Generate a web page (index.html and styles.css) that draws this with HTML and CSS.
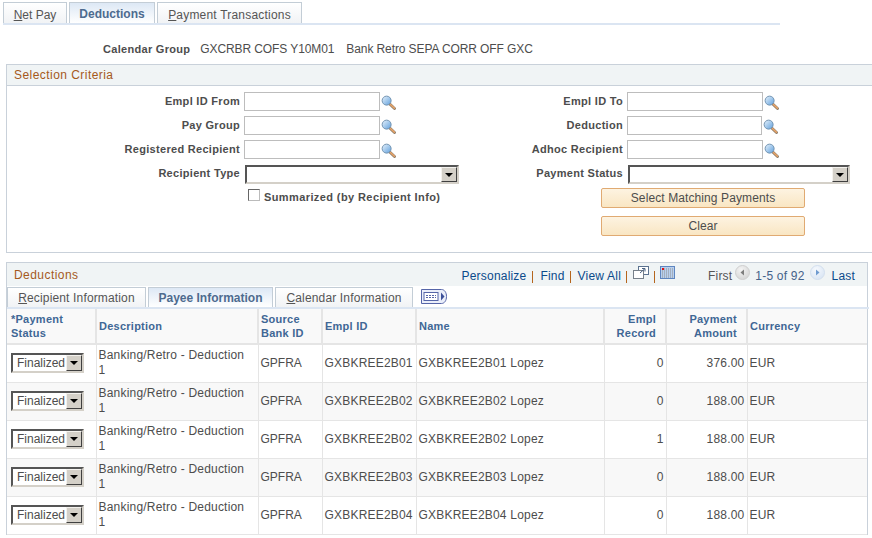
FILE: index.html
```html
<!DOCTYPE html>
<html lang="en">
<head>
<meta charset="utf-8">
<title>Deductions</title>
<link rel="stylesheet" href="styles.css">
</head>
<body>
<svg class="defs" width="0" height="0" aria-hidden="true">
  <defs>
    <linearGradient id="lens" x1="0" y1="0" x2="1" y2="1">
      <stop offset="0" stop-color="#e8f3fc"/><stop offset="1" stop-color="#5f9fdc"/>
    </linearGradient>
    <radialGradient id="btnL" cx="0.4" cy="0.3" r="0.8">
      <stop offset="0" stop-color="#f4f4f4"/><stop offset="1" stop-color="#d2d2d2"/>
    </radialGradient>
    <radialGradient id="btnR" cx="0.4" cy="0.3" r="0.8">
      <stop offset="0" stop-color="#f6f9fd"/><stop offset="1" stop-color="#d6e3f3"/>
    </radialGradient>
    <symbol id="mag" viewBox="0 0 16 16">
      <path d="M9.6 9.8 14.4 14.4" stroke="#8a7a66" stroke-width="3" stroke-linecap="round"/>
      <path d="M9.8 9.8 14.2 14" stroke="#e9a468" stroke-width="1.6" stroke-linecap="round"/>
      <circle cx="6" cy="6" r="4.8" fill="url(#lens)" stroke="#6d8fae" stroke-width="1"/>
    </symbol>
  </defs>
</svg>

<nav class="tabs">
  <a class="tab tab-net"><u>N</u>et Pay</a>
  <a class="tab tab-on">Deductions</a>
  <a class="tab tab-pay"><u>P</u>ayment Transactions</a>
</nav>

<p class="calendar"><b>Calendar Group</b><span>GXCRBR COFS Y10M01</span><span>Bank Retro SEPA CORR OFF GXC</span></p>

<section class="criteria">
  <h2 class="section-title">Selection Criteria</h2>
  <div class="form">
    <label class="lbl">Empl ID From</label>
    <div class="field"><span class="input"></span><svg class="mag"><use href="#mag"/></svg></div>
    <label class="lbl">Empl ID To</label>
    <div class="field"><span class="input"></span><svg class="mag"><use href="#mag"/></svg></div>

    <label class="lbl">Pay Group</label>
    <div class="field"><span class="input"></span><svg class="mag"><use href="#mag"/></svg></div>
    <label class="lbl">Deduction</label>
    <div class="field"><span class="input input-short"></span><svg class="mag"><use href="#mag"/></svg></div>

    <label class="lbl">Registered Recipient</label>
    <div class="field"><span class="input"></span><svg class="mag"><use href="#mag"/></svg></div>
    <label class="lbl">Adhoc Recipient</label>
    <div class="field"><span class="input"></span><svg class="mag"><use href="#mag"/></svg></div>

    <label class="lbl">Recipient Type</label>
    <div class="field"><span class="select select-left"><i class="arrow"></i></span></div>
    <label class="lbl">Payment Status</label>
    <div class="field"><span class="select select-right"><i class="arrow"></i></span></div>

    <div class="check-cell"><span class="checkbox"></span><b>Summarized (by Recipient Info)</b></div>
    <div class="button-cell">
      <button class="btn">Select Matching Payments</button>
      <button class="btn">Clear</button>
    </div>
  </div>
</section>

<section class="grid">
  <header class="grid-head">
    <h2 class="section-title-plain">Deductions</h2>
    <div class="grid-nav">
      <a>Personalize</a><i class="sep sep-first"></i><a>Find</a><i class="sep"></i><a>View All</a><i class="sep sep-view"></i>
      <svg class="ico" width="16" height="14" viewBox="0 0 16 14" aria-hidden="true">
        <rect x="5.5" y="0.5" width="10" height="8" fill="#fff" stroke="#5b7290"/>
        <rect x="0.5" y="4.5" width="10" height="8" fill="#fff" stroke="#77808a"/>
        <path d="M7 7 12 2.5M9 2.5h3v3" fill="none" stroke="#4b6282"/>
      </svg>
      <i class="sep sep-tight"></i>
      <svg class="ico" width="15" height="13" viewBox="0 0 15 13" aria-hidden="true">
        <rect x="0.5" y="0.5" width="14" height="12" fill="#b9d0ee" stroke="#5f86c0"/>
        <path d="M2 3h11M2 5h11M2 7h11M2 9h11M2 11h11" stroke="#8e8e8e" stroke-dasharray="1 1"/>
        <rect x="2" y="2" width="2" height="2" fill="#e01010"/>
      </svg>
      <span class="first">First</span>
      <svg class="round" width="15" height="15" viewBox="0 0 15 15" aria-hidden="true">
        <circle cx="7.5" cy="7.5" r="7" fill="url(#btnL)" stroke="#cfcfcf"/><path d="M9 4.5v6L5.5 7.5z" fill="#7d7d7d"/>
      </svg>
      <span class="range">1-5 of 92</span>
      <svg class="round" width="15" height="15" viewBox="0 0 15 15" aria-hidden="true">
        <circle cx="7.5" cy="7.5" r="7" fill="url(#btnR)" stroke="#d3dfee"/><path d="M6 4.5v6l3.5-3z" fill="#6f9bd0"/>
      </svg>
      <a class="last">Last</a>
    </div>
  </header>
  <div class="subtabs">
    <a class="subtab st-rec"><u>R</u>ecipient Information</a>
    <a class="subtab st-pay">Payee Information</a>
    <a class="subtab st-cal"><u>C</u>alendar Information</a>
    <svg class="showall" width="28" height="15" viewBox="0 0 28 15" aria-hidden="true">
      <path d="M1.5.5h20c3 0 5 3 5 7s-2 7-5 7h-20z" fill="#eaeefa" stroke="#5565a8"/>
      <rect x="4" y="3.5" width="14" height="8" fill="#fff" stroke="#5565a8"/>
      <path d="M6 6.5h10M6 8.5h10" stroke="#5565a8" stroke-dasharray="2 1"/>
      <path d="M21 3.5v8l3.5-4z" fill="#3a4e98"/>
    </svg>
  </div>
  <table>
    <colgroup>
      <col class="c1"><col class="c2"><col class="c3"><col class="c4"><col class="c5"><col class="c6"><col class="c7"><col class="c8">
    </colgroup>
    <thead>
      <tr>
        <th>*Payment Status</th><th>Description</th><th>Source Bank ID</th><th>Empl ID</th><th>Name</th>
        <th class="num">Empl Record</th><th class="num">Payment Amount</th><th>Currency</th>
      </tr>
    </thead>
    <tbody>
      <tr>
        <td><span class="select select-cell">Finalized<i class="arrow"></i></span></td>
        <td>Banking/Retro - Deduction 1</td><td>GPFRA</td><td>GXBKREE2B01</td><td>GXBKREE2B01 Lopez</td>
        <td class="num">0</td><td class="num">376.00</td><td>EUR</td>
      </tr>
      <tr class="alt">
        <td><span class="select select-cell">Finalized<i class="arrow"></i></span></td>
        <td>Banking/Retro - Deduction 1</td><td>GPFRA</td><td>GXBKREE2B02</td><td>GXBKREE2B02 Lopez</td>
        <td class="num">0</td><td class="num">188.00</td><td>EUR</td>
      </tr>
      <tr>
        <td><span class="select select-cell">Finalized<i class="arrow"></i></span></td>
        <td>Banking/Retro - Deduction 1</td><td>GPFRA</td><td>GXBKREE2B02</td><td>GXBKREE2B02 Lopez</td>
        <td class="num">1</td><td class="num">188.00</td><td>EUR</td>
      </tr>
      <tr class="alt">
        <td><span class="select select-cell">Finalized<i class="arrow"></i></span></td>
        <td>Banking/Retro - Deduction 1</td><td>GPFRA</td><td>GXBKREE2B03</td><td>GXBKREE2B03 Lopez</td>
        <td class="num">0</td><td class="num">188.00</td><td>EUR</td>
      </tr>
      <tr>
        <td><span class="select select-cell">Finalized<i class="arrow"></i></span></td>
        <td>Banking/Retro - Deduction 1</td><td>GPFRA</td><td>GXBKREE2B04</td><td>GXBKREE2B04 Lopez</td>
        <td class="num">0</td><td class="num">188.00</td><td>EUR</td>
      </tr>
    </tbody>
  </table>
</section>
</body>
</html>
```
FILE: styles.css
```css
* { box-sizing: border-box; }
html, body { margin: 0; padding: 0; background: #fff; }
body {
  width: 872px;
  height: 538px;
  overflow: hidden;
  font-family: "Liberation Sans", Arial, sans-serif;
  font-size: 12px;
  color: #4d4d4d;
}
.defs { position: absolute; }
u { text-decoration: underline; }

/* top tabs */
.tabs {
  display: flex;
  gap: 2px;
  width: 777px;
  height: 25px;
  margin-left: 3px;
  padding-top: 2px;
  border-bottom: 2px solid #dbe5f2;
}
.tab {
  height: 21px;
  border: 1px solid #c3cdd6;
  border-bottom: 0;
  background: linear-gradient(#ffffff, #f1f3f5);
  color: #555;
  text-align: center;
  line-height: 24px;
  letter-spacing: 0.2px;
}
.tab-net { width: 64px; letter-spacing: 0; }
.tab-on {
  width: 86px;
  background: linear-gradient(#dde8f5, #ffffff);
  font-weight: bold;
  color: #4d6b8f;
  line-height: 22px;
  letter-spacing: 0;
}
.tab-pay { width: 145px; }

/* calendar line */
.calendar {
  display: flex;
  margin: 17px 0 0 103px;
  height: 14px;
  line-height: 14px;
  font-size: 11px;
  white-space: pre;
}
.calendar b { letter-spacing: 0.3px; }
.calendar span { margin-left: 10px; font-size: 12px; letter-spacing: -0.1px; }
.calendar span + span { margin-left: 12px; }

/* selection criteria */
.criteria {
  margin: 8px 0 0 6px;
  height: 189px;
  border: 1px solid #c9d1da;
  border-width: 1px 0 1px 1px;
}
.section-title {
  margin: 0;
  height: 21px;
  padding-left: 7px;
  background: #f0f4f5;
  border-bottom: 1px solid #c9d1da;
  color: #a5591c;
  font-size: 12px;
  font-weight: normal;
  line-height: 20px;
  letter-spacing: 0.45px;
}
.form {
  display: grid;
  grid-template-columns: 233px 236px 147px 1fr;
  grid-auto-rows: 24px;
  padding-top: 6px;
}
.lbl {
  text-align: right;
  font-weight: bold;
  font-size: 11px;
  line-height: 19px;
  letter-spacing: 0.3px;
}
.field { display: flex; align-items: flex-start; padding-left: 4px; }
.input {
  display: block;
  width: 136px;
  height: 19px;
  border: 1px solid #bdbdbd;
  background: #fff;
}
.input-short { width: 135px; }
.mag { width: 15px; height: 15px; margin: 3px 0 0 1px; flex: none; }

.select {
  position: relative;
  display: block;
  height: 19px;
  border: 2px solid;
  border-color: #555 #d4d0c8 #d4d0c8 #555;
  background: #fff;
}
.select-left { width: 214px; margin: 1px 0 0 1px; }
.select-right { width: 222px; margin: 1px 0 0 1px; }
.arrow {
  position: absolute;
  top: 0;
  right: 0;
  bottom: 0;
  width: 16px;
  background: #d4d0c8;
  border: 1px solid;
  border-color: #f4f2ee #404040 #404040 #f4f2ee;
}
.arrow::after {
  content: "";
  position: absolute;
  top: 5px;
  left: 3px;
  border: 4px solid transparent;
  border-top: 4px solid #000;
  border-bottom: 0;
}

.check-cell {
  grid-column: 1 / 3;
  display: flex;
  align-items: flex-start;
  padding: 0 0 0 241px;
  font-size: 11px;
  letter-spacing: 0.4px;
  line-height: 18px;
}
.checkbox {
  flex: none;
  width: 12px;
  height: 12px;
  margin: 1px 4px 0 0;
  border: 1px solid;
  border-color: #666 #bbb #bbb #666;
  background: #fff;
}
.button-cell {
  grid-column: 3 / 5;
  padding-left: 125px;
  display: flex;
  flex-direction: column;
  align-items: flex-start;
  gap: 8px;
}
.btn {
  display: block;
  flex: none;
  width: 204px;
  height: 20px;
  padding: 0;
  border: 1px solid #e0aa72;
  border-radius: 2px;
  background: linear-gradient(#fdf3e1, #f9e6c3);
  color: #4d4d4d;
  font: 12px "Liberation Sans", Arial, sans-serif;
  letter-spacing: 0.1px;
}

/* grid */
.grid {
  margin: 9px 0 0 6px;
  width: 862px;
  border-left: 1px solid #c9d1da;
  border-right: 1px solid #c9d1da;
  border-top: 1px solid #c9d1da;
}
.grid-head {
  display: flex;
  justify-content: space-between;
  height: 23px;
  background: #f0f4f5;
}
.section-title-plain {
  margin: 0;
  padding-left: 7px;
  color: #a5591c;
  font-size: 12px;
  font-weight: normal;
  line-height: 24px;
  letter-spacing: 0.45px;
}
.grid-nav {
  display: flex;
  align-items: flex-start;
  padding: 6px 12px 0 0;
  line-height: 14px;
  font-size: 12px;
  letter-spacing: 0.2px;
  color: #0a4a8a;
}
.grid-nav a { color: #0b4a8b; }
.sep {
  display: block;
  width: 1px;
  height: 12px;
  margin: 2px 7px 0 5px;
  background: #b5651d;
}
.sep-first { margin-left: 6px; }
.sep-view { margin-right: 6px; }
.sep-tight { margin: 2px 5px 0; }
.ico { margin-top: -3px; }
.first { margin-left: 33px; margin-right: -2px; color: #555; }
.round { margin: -4px 5px 0; }
.range { color: #44628a; }
.last { margin-left: 2px; }

.subtabs {
  display: flex;
  align-items: flex-start;
  height: 23px;
  padding-top: 1px;
  border-bottom: 2px solid #dbe5f2;
  margin-right: -2px;
}
.subtab {
  height: 20px;
  border: 1px solid #c3cdd6;
  border-bottom: 0;
  text-align: center;
  line-height: 20px;
  color: #555;
  background: linear-gradient(#ffffff, #f1f3f5);
  letter-spacing: 0.15px;
}
.st-rec { width: 139px; }
.st-pay {
  width: 125px;
  margin-left: 2px;
  background: linear-gradient(#dde8f5, #ffffff);
  color: #4d6b8f;
  font-weight: bold;
  letter-spacing: 0;
}
.st-cal { width: 138px; margin-left: 2px; }
.showall { margin: 2px 0 0 7px; }

table {
  width: 860px;
  table-layout: fixed;
  border-collapse: collapse;
  font-size: 12px;
}
.c1 { width: 89px; } .c2 { width: 162px; } .c3 { width: 64px; } .c4 { width: 94px; }
.c5 { width: 188px; } .c6 { width: 62px; } .c7 { width: 81px; } .c8 { width: 120px; }
th {
  height: 35px;
  padding: 0 2px;
  background: #f9f9f9;
  border-right: 2px solid #e5e5e5;
  border-bottom: 2px solid #e5e5e5;
  color: #3f6795;
  font-size: 11px;
  font-weight: bold;
  line-height: 14px;
  letter-spacing: 0.25px;
  text-align: left;
}
th:first-child { padding-left: 4px; }
td {
  height: 38px;
  padding: 0 2px;
  border-right: 1px solid #e5e5e5;
  border-bottom: 1px solid #e5e5e5;
  line-height: 15px;
  letter-spacing: 0.2px;
}
td:nth-child(2) { padding-right: 8px; }
td:nth-child(3) { letter-spacing: 0; }
.alt td { background: #f8f8f8; }
th.num, td.num { text-align: right; }
th.num { padding-right: 9px; }
td.num { padding-right: 2px; }
th:last-child, td:last-child { border-right: 0; }
.select-cell {
  width: 73px;
  height: 20px;
  margin-left: 2px;
  padding-left: 4px;
  line-height: 16px;
  font-size: 12px;
  letter-spacing: 0;
}
```
